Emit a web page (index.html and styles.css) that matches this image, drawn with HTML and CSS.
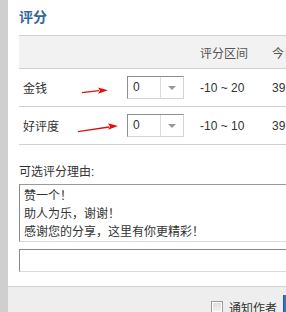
FILE: index.html
```html
<!DOCTYPE html>
<html lang="zh-CN">

<head>
    <meta charset="UTF-8">
    <meta name="viewport" content="width=device-width, initial-scale=1.0">
    <title>评分</title>
    <link rel="stylesheet" href="styles.css">
</head>

<body>
    <div class="window">
        <div class="edge"></div>
        <div class="panel">
            <div class="content">
                <h3 class="title">评分</h3>

                <div class="rate-wrap">
                    <table class="rate">
                        <thead>
                            <tr>
                                <th class="c-name"></th>
                                <th class="c-sel"></th>
                                <th class="c-range">评分区间</th>
                                <th class="c-left">今日剩余</th>
                            </tr>
                        </thead>
                        <tbody>
                            <tr>
                                <td>金钱</td>
                                <td>
                                    <div class="sel"><span class="sel-val">0</span><span class="sel-btn"><i></i></span></div>
                                </td>
                                <td>-10 ~ 20</td>
                                <td>39</td>
                            </tr>
                            <tr>
                                <td>好评度</td>
                                <td>
                                    <div class="sel"><span class="sel-val">0</span><span class="sel-btn"><i></i></span></div>
                                </td>
                                <td>-10 ~ 10</td>
                                <td>39</td>
                            </tr>
                        </tbody>
                    </table>

                    <!-- red pointers drawn over the table -->
                    <svg class="marks" width="110" height="110" viewBox="0 0 110 110">
                        <path d="M63 57.6 L80 55.6" stroke="#e01010" stroke-width="1.3" fill="none"/>
                        <polygon points="79,52.5 89,55.2 79,58.8 81,55.5" fill="#e01010"/>
                        <path d="M59 96.7 L90 92" stroke="#e01010" stroke-width="1.3" fill="none"/>
                        <polygon points="89,88.3 99,91 89,94.8 91,91.5" fill="#e01010"/>
                    </svg>
                </div>

                <p class="label">可选评分理由:</p>
                <div class="reasons">
                    <div>赞一个！</div>
                    <div>助人为乐，谢谢！</div>
                    <div>感谢您的分享，这里有你更精彩！</div>
                </div>
                <div class="reason-input"></div>
            </div>

            <div class="footer">
                <label class="notify"><span class="check"></span>通知作者</label>
                <button class="submit">确定</button>
            </div>
        </div>
    </div>
</body>

</html>
```

FILE: styles.css
```css
html,
body {
    margin: 0;
    padding: 0;
    overflow: hidden;
}

body {
    font-family: "Liberation Sans", "Noto Sans CJK SC", sans-serif;
    font-size: 12px;
    color: #333;
    background-color: #fff;
}

.window {
    display: flex;
    width: 370px;
    height: 312px;
}

.edge {
    width: 8px;
    flex: none;
    background-color: #cfcfcf;
}

.panel {
    width: 362px;
    flex: none;
    display: flex;
    flex-direction: column;
}

.content {
    padding: 7px 12px 14px 11px;
}

.title {
    margin: 0 0 8px;
    font-size: 14px;
    line-height: 20px;
    font-weight: bold;
    color: #336699;
}

.rate-wrap {
    position: relative;
}

.rate {
    border-collapse: collapse;
    table-layout: fixed;
    width: 339px;
}

.rate th,
.rate td {
    padding: 0 4px;
    text-align: left;
    font-weight: normal;
    border-top: 1px solid #d0d0d0;
    border-bottom: 1px solid #d0d0d0;
}

.rate th {
    height: 32px;
    background-color: #f2f2f2;
    color: #555;
}

.rate td {
    height: 37px;
}

.c-name {
    width: 96px;
}

.c-sel {
    width: 65px;
}

.c-range {
    width: 64px;
}

.sel {
    display: flex;
    width: 57px;
    height: 23px;
    box-sizing: border-box;
    border: 1px solid #d4d4d4;
    border-top-color: #8e8e8e;
    border-left-color: #8e8e8e;
    background-color: #fff;
}

.sel-val {
    flex: 1;
    padding-left: 5px;
    line-height: 21px;
    color: #333;
}

.sel-btn {
    width: 22px;
    border-left: 1px solid #dcdcdc;
    display: flex;
    align-items: center;
    justify-content: center;
}

.sel-btn i {
    width: 0;
    height: 0;
    border-left: 4px solid transparent;
    border-right: 4px solid transparent;
    border-top: 4px solid #999;
}

.marks {
    position: absolute;
    left: 0;
    top: 0;
    pointer-events: none;
}

.label {
    margin: 19px 0 4px;
    line-height: 16px;
}

.reasons {
    line-height: 18px;
    padding: 2px 4px 0;
    border: 1px solid #dadada;
    border-top-color: #9a9a9a;
    border-left-color: #8a8a8a;
}

.reason-input {
    margin-top: 7px;
    height: 21px;
    border: 1px solid #dadada;
    border-top-color: #8a8a8a;
    border-left-color: #8a8a8a;
}

.footer {
    flex: 1;
    display: flex;
    align-items: flex-start;
    justify-content: flex-end;
    padding: 8px 25px 0 0;
    background-color: #eeeeee;
    border-top: 1px solid #d0d0d0;
}

.notify {
    display: flex;
    align-items: center;
    height: 24px;
}

.check {
    width: 10px;
    height: 10px;
    margin-right: 6px;
    border: 1px solid #9a9a9a;
    background: linear-gradient(#dcdcdc, #f4f4f4);
    box-shadow: inset 0 0 0 1px #fff;
}

.submit {
    margin-left: 6px;
    width: 62px;
    height: 24px;
    border: none;
    border-left: 1px solid #1f5a9e;
    background-color: #3378c6;
    color: #fff;
    font-family: inherit;
    font-size: 12px;
}
```
